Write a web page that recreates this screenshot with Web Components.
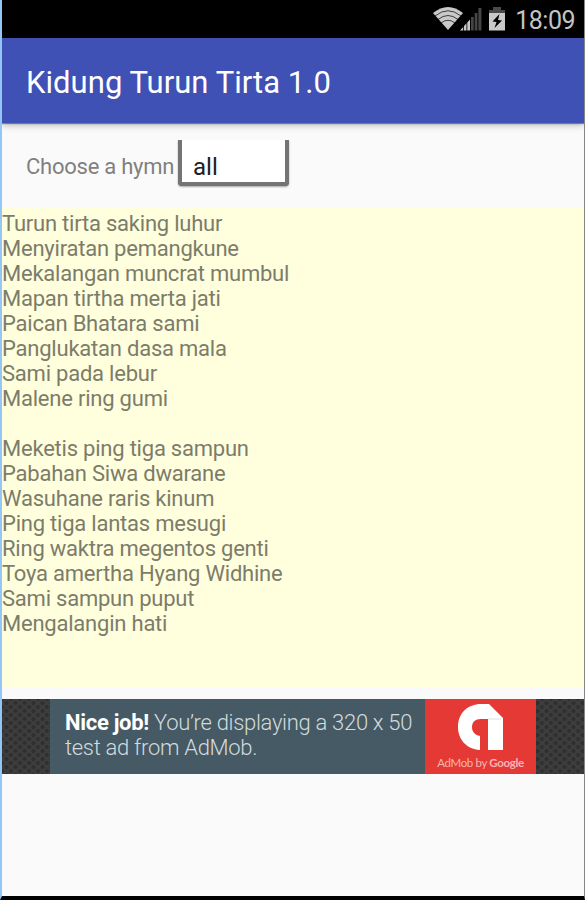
<!DOCTYPE html>
<html lang="id">
<head>
<meta charset="utf-8">
<title>Kidung Turun Tirta</title>
<style>
  body {
    margin: 0;
    font-family: Roboto, "Liberation Sans", sans-serif;
  }
</style>
</head>
<body>
<kt-screen>
  <kt-status time="18:09"></kt-status>
  <kt-toolbar>Kidung Turun Tirta 1.0</kt-toolbar>
  <kt-picker label="Choose a hymn" value="all"></kt-picker>
  <kt-lyrics>Turun tirta saking luhur
Menyiratan pemangkune
Mekalangan muncrat mumbul
Mapan tirtha merta jati
Paican Bhatara sami
Panglukatan dasa mala
Sami pada lebur
Malene ring gumi

Meketis ping tiga sampun
Pabahan Siwa dwarane
Wasuhane raris kinum
Ping tiga lantas mesugi
Ring waktra megentos genti
Toya amertha Hyang Widhine
Sami sampun puput
Mengalangin hati</kt-lyrics>
  <kt-ad><b>Nice job!</b> You’re displaying a 320 x 50<br>test ad from AdMob.</kt-ad>
</kt-screen>

<script>
  class KtElement extends HTMLElement {
    constructor() {
      super();

      const template = document.createElement( 'template' );
      template.innerHTML = this.constructor.markup;
      this.attachShadow( {mode: 'open'} );
      this.shadowRoot.appendChild( template.content.cloneNode( true ) );
    }
  }

  class KtScreen extends KtElement {
    static markup = /* template */ `
      <style>
        :host {
          background: #fafafa;
          border-bottom: 4px solid #000000;
          border-left: 2px solid #94c6f8;
          border-right: 1px solid #858585;
          box-sizing: border-box;
          display: flex;
          flex-direction: column;
          height: 900px;
          overflow: hidden;
          width: 585px;
        }
      </style>
      <slot></slot>
    `;
  }

  class KtStatus extends KtElement {
    static markup = /* template */ `
      <style>
        :host {
          align-items: center;
          background: #000000;
          box-sizing: border-box;
          color: #c4c4c4;
          display: flex;
          flex: 0 0 38px;
          gap: 5px;
          justify-content: flex-end;
          padding: 0 9px 0 0;
        }

        svg {
          display: block;
          height: 38px;
          width: 78px;
        }

        span {
          font-size: 25px;
          letter-spacing: -0.5px;
          line-height: 34px;
          padding-top: 4px;
        }
      </style>
      <svg viewBox="-1 0 78 38">
        <path d="M0 13 Q15 1 30 13 L15 30 Z" fill="#c9c9c9"/>
        <g fill="none" stroke="#000000" stroke-width="0.700">
          <path d="M2 16 Q15 5.500 28 16"/>
          <path d="M5 19.500 Q15 11.500 25 19.500"/>
          <path d="M8 23 Q15 17.500 22 23"/>
        </g>
        <g fill="#464646">
          <rect x="38" y="17" width="2.700" height="13.500"/>
          <rect x="41.700" y="13" width="2.700" height="17.500"/>
          <rect x="45.400" y="8" width="3" height="22.500"/>
        </g>
        <path d="M27 30.500 L30.200 27 V30.500 Z M31 26 L33.500 23.300 V30.500 H31 Z M34.300 22.500 L37 19.500 V30.500 H34.300 Z" fill="#c9c9c9"/>
        <path d="M56 13 V10 H60 V7 H68 V10 H72 V13 Z" fill="#4a4a4a"/>
        <rect x="56" y="13" width="16" height="17.500" fill="#c9c9c9"/>
        <path d="M66.500 14 L59.500 21.500 L63.500 22 L61.500 28 L69 20.500 L65 20 Z" fill="#000000"/>
      </svg>
      <span></span>
    `;

    connectedCallback() {
      this.shadowRoot.querySelector( 'span' ).textContent = this.getAttribute( 'time' );
    }
  }

  class KtToolbar extends KtElement {
    static markup = /* template */ `
      <style>
        :host {
          background: #3f51b5;
          box-shadow: 0 2px 7px rgba( 0, 0, 0, 0.28 ), 0 1px 1px rgba( 0, 0, 0, 0.4 );
          box-sizing: border-box;
          color: #ffffff;
          display: block;
          flex: 0 0 85px;
          font-size: 31px;
          letter-spacing: 0.04px;
          line-height: 36px;
          padding: 27px 24px 0 24px;
          white-space: nowrap;
        }
      </style>
      <slot></slot>
    `;
  }

  class KtPicker extends KtElement {
    static markup = /* template */ `
      <style>
        :host {
          box-sizing: border-box;
          color: #808080;
          display: flex;
          flex: 0 0 84px;
          font-size: 22px;
          letter-spacing: -0.25px;
          line-height: 26px;
          padding: 17px 0 0 24px;
        }

        label {
          padding-top: 14px;
          white-space: nowrap;
          width: 152px;
        }

        span {
          background: #ffffff;
          border: 4px solid #747474;
          border-radius: 0 0 4px 4px;
          border-top: none;
          box-shadow: 0 1px 2px rgba( 0, 0, 0, 0.35 );
          box-sizing: border-box;
          clip-path: inset( 0 -4px -4px -4px );
          color: #212121;
          font-size: 24px;
          height: 46px;
          letter-spacing: 0;
          padding: 14px 0 0 11px;
          width: 111px;
        }
      </style>
      <label></label>
      <span></span>
    `;

    connectedCallback() {
      this.shadowRoot.querySelector( 'label' ).textContent = this.getAttribute( 'label' );
      this.shadowRoot.querySelector( 'span' ).textContent = this.getAttribute( 'value' );
    }
  }

  class KtLyrics extends KtElement {
    static markup = /* template */ `
      <style>
        :host {
          background: #ffffdd;
          box-sizing: border-box;
          color: #7c7c6b;
          display: block;
          flex: 0 0 480px;
          font-size: 22px;
          letter-spacing: -0.22px;
          line-height: 24.97px;
          padding-top: 5px;
        }

        div {
          white-space: pre;
        }
      </style>
      <div><slot></slot></div>
    `;
  }

  class KtAd extends KtElement {
    static markup = /* template */ `
      <style>
        :host {
          background-color: #3d3d3d;
          background-image:
            radial-gradient( circle, #2f2f2f 1.5px, transparent 2.5px ),
            radial-gradient( circle, #2f2f2f 1.5px, transparent 2.5px );
          background-position: 0 0, 4.5px 4px;
          background-size: 9px 8px;
          display: flex;
          flex: 0 0 75px;
          justify-content: center;
          margin-top: 12px;
        }

        p {
          background: #455a64;
          box-sizing: border-box;
          color: #d3dade;
          font-size: 22px;
          font-weight: 300;
          letter-spacing: -0.3px;
          line-height: 25px;
          margin: 0;
          padding: 11px 0 0 15px;
          white-space: nowrap;
          width: 375px;
        }

        ::slotted( b ) {
          color: #ffffff;
          font-weight: 700;
        }

        div {
          align-items: center;
          background: #e53935;
          color: #f6b5b3;
          display: flex;
          flex-direction: column;
          font-family: Lato, sans-serif;
          font-size: 11.5px;
          letter-spacing: -0.35px;
          line-height: 14px;
          white-space: nowrap;
          width: 111px;
        }

        svg {
          display: block;
          flex: 0 0 57px;
          height: 57px;
          width: 111px;
        }

        strong {
          font-weight: 700;
        }
      </style>
      <p><slot></slot></p>
      <div>
        <svg viewBox="0 0 111 57">
          <path d="M55 51 C41 50 33 40 33 28 C33 14 43 5 56 5 H64 L78 19 V51 H63 V20 H56 C50 20 47 23 47 28 C47 33 50 36 55 37 Z" fill="#ffffff"/>
          <path d="M63 20 H76" stroke="#dedede" fill="none"/>
        </svg>
        <span>AdMob by <strong>Google</strong></span>
      </div>
    `;
  }

  window.customElements.define( 'kt-screen', KtScreen );
  window.customElements.define( 'kt-status', KtStatus );
  window.customElements.define( 'kt-toolbar', KtToolbar );
  window.customElements.define( 'kt-picker', KtPicker );
  window.customElements.define( 'kt-lyrics', KtLyrics );
  window.customElements.define( 'kt-ad', KtAd );
</script>
</body>
</html>
